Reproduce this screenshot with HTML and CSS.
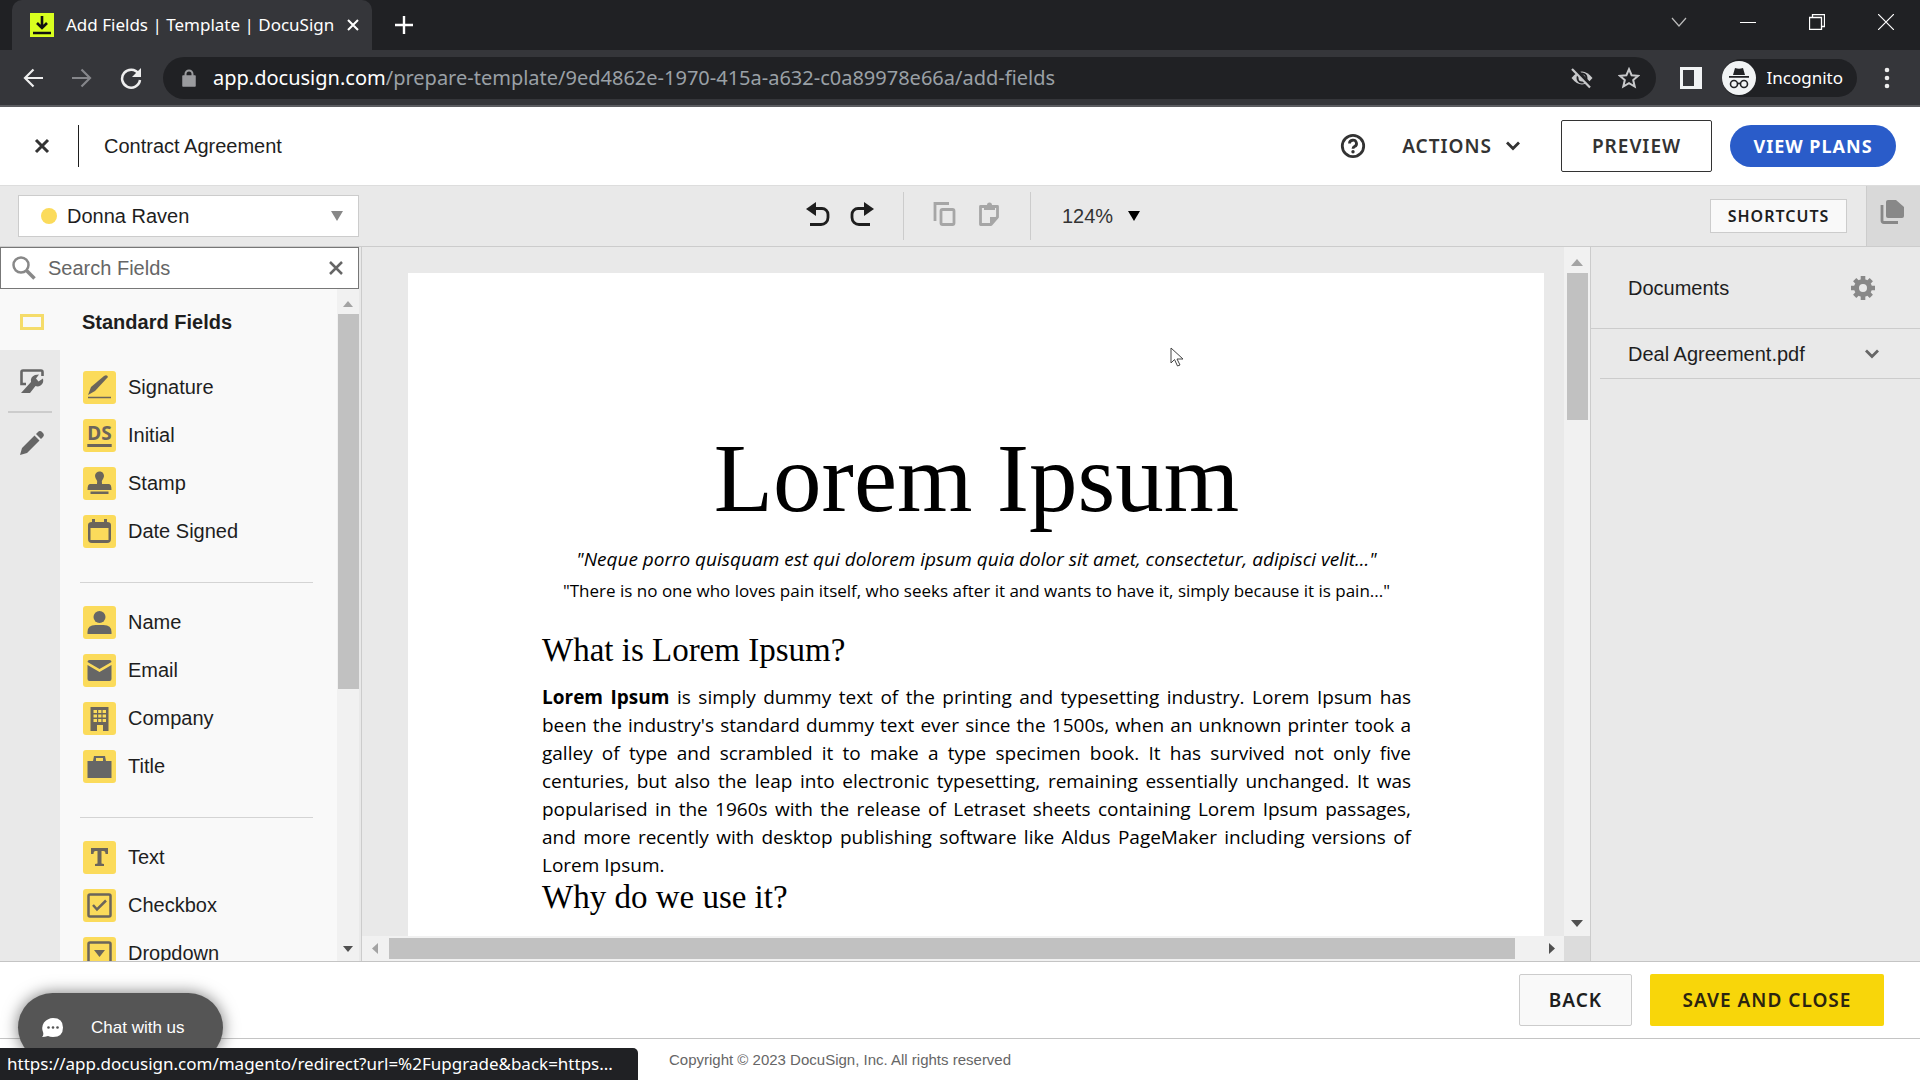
FILE: index.html
```html
<!DOCTYPE html>
<html lang="en">
<head>
<meta charset="utf-8">
<title>Add Fields | Template | DocuSign</title>
<link rel="stylesheet" href="styles.css">
</head>
<body>
<div class="browser">
  <div class="tabbar">
    <div class="tab">
      <svg class="favicon" width="24" height="24" viewBox="0 0 24 24"><path fill="#d9ff1f" d="M0 0h24v24H0z"/><path d="M12 3v12M7 10l5 5 5-5M3 20h18" fill="none" stroke="#111" stroke-width="2.6"/></svg>
      <span class="tab-title">Add Fields | Template | DocuSign</span>
      <button class="chrome-btn" aria-label="Close tab"><svg width="14" height="14" viewBox="0 0 14 14"><path d="M2 2l10 10M12 2L2 12" stroke="#fff" stroke-width="2"/></svg></button>
    </div>
    <button class="chrome-btn new-tab" aria-label="New tab"><svg width="18" height="18" viewBox="0 0 18 18"><path d="M9 0v18M0 9h18" stroke="#fff" stroke-width="2.4"/></svg></button>
    <div class="window-controls">
      <button class="chrome-btn" aria-label="Search tabs"><svg width="16" height="16" viewBox="0 0 16 16"><path d="M1 4l7 8 7-8" fill="none" stroke="#bbb" stroke-width="1.2"/></svg></button>
      <button class="chrome-btn" aria-label="Minimize"><svg width="16" height="16" viewBox="0 0 16 16"><path d="M0 8.5h16" stroke="#fff"/></svg></button>
      <button class="chrome-btn" aria-label="Restore"><svg width="16" height="16" viewBox="0 0 16 16"><path d="M.5 3.500h12v12H.5zM3.500 3V.5h12v12H13" fill="none" stroke="#fff" stroke-width="1.300"/></svg></button>
      <button class="chrome-btn" aria-label="Close window"><svg width="16" height="16" viewBox="0 0 16 16"><path d="M0 0l16 16M16 0L0 16" stroke="#fff" stroke-width="1.200"/></svg></button>
    </div>
  </div>
  <div class="navbar">
    <button class="chrome-btn nav" aria-label="Back"><svg width="20" height="20" viewBox="0 0 20 20"><path d="M20 10H2M10.500 1.500L2 10l8.500 8.500" fill="none" stroke="#eee" stroke-width="2.200"/></svg></button>
    <button class="chrome-btn nav" aria-label="Forward"><svg width="20" height="20" viewBox="0 0 20 20"><path d="M0 10h18M9.500 1.500L18 10l-8.500 8.500" fill="none" stroke="#85868a" stroke-width="2.200"/></svg></button>
    <button class="chrome-btn nav" aria-label="Reload"><svg width="22" height="22" viewBox="0 0 22 22"><path d="M18.500 6.500A9 9 0 1 0 20 13" fill="none" stroke="#eee" stroke-width="2.500"/><path d="M21 1v9h-9z" fill="#eee"/></svg></button>
    <div class="omnibox">
      <svg width="14" height="18" viewBox="0 0 14 18"><path d="M1 7h12v10H1z" fill="#9a9b9e" stroke="#9a9b9e" stroke-width="1.500" stroke-linejoin="round"/><path d="M3.500 8V5a3.500 3.500 0 0 1 7 0v3" fill="none" stroke="#9a9b9e" stroke-width="2"/></svg>
      <div class="url"><span class="host">app.docusign.com</span>/prepare-template/9ed4862e-1970-415a-a632-c0a89978e66a/add-fields</div>
      <button class="chrome-btn" aria-label="Cookies blocked"><svg width="24" height="24" viewBox="0 0 24 24"><path d="M1.500 12Q12-1 22.500 12 12 25 1.500 12z" fill="#c8c9cb"/><circle cx="12" cy="12" r="4.500" fill="none" stroke="#202124" stroke-width="2"/><path d="M4 2l18 19" stroke="#202124" stroke-width="4"/><path d="M2 3l18 18.500" stroke="#c8c9cb" stroke-width="2.200"/></svg></button>
      <button class="chrome-btn" aria-label="Bookmark"><svg width="22" height="22" viewBox="0 0 22 22"><path d="M11 2.200l2.600 6 6.500.6-4.900 4.300 1.500 6.400L11 16.100l-5.700 3.400 1.500-6.400L1.900 8.800l6.500-.6z" fill="none" stroke="#c8c9cb" stroke-width="2"/></svg></button>
    </div>
    <button class="chrome-btn side-btn" aria-label="Side panel"><svg width="22" height="22" viewBox="0 0 22 22"><path d="M0 0h22v22H0zM3 3v16h11V3z" fill="#f1f3f4" fill-rule="evenodd"/></svg></button>
    <button class="incognito"><svg width="34" height="34" viewBox="0 0 34 34"><circle cx="17" cy="17" r="17" fill="#f1f3f4"/><path d="M11 14l2-7q4 1.500 8 0l2 7zM7 15h20v1.800H7z" fill="#202124"/><g fill="none" stroke="#202124" stroke-width="1.600"><circle cx="12" cy="23" r="3.500"/><circle cx="22" cy="23" r="3.500"/><path d="M15.500 23q1.500-1.500 3 0"/></g></svg>Incognito</button>
    <button class="chrome-btn menu-btn" aria-label="Menu"><svg width="6" height="22" viewBox="0 0 6 22"><g fill="#eee"><circle cx="3" cy="3" r="2.300"/><circle cx="3" cy="11" r="2.300"/><circle cx="3" cy="19" r="2.300"/></g></svg></button>
  </div>
</div>

<header class="app-header">
  <button class="icon-btn close-btn" aria-label="Close"><svg width="16" height="16" viewBox="0 0 16 16"><path d="M2 2l12 12M14 2L2 14" stroke="#333" stroke-width="3"/></svg></button>
  <div class="doc-title">Contract Agreement</div>
  <button class="icon-btn help-btn" aria-label="Help"><svg width="26" height="26" viewBox="0 0 26 26"><circle cx="13" cy="13" r="10.700" fill="none" stroke="#333" stroke-width="2.800"/><path d="M9.500 10.500a3.500 3.300 0 1 1 5 3q-1.500.8-1.500 2.300" fill="none" stroke="#333" stroke-width="2.800"/><circle cx="13" cy="18.700" r="1.700" fill="#333"/></svg></button>
  <button class="actions-btn">ACTIONS<svg width="14" height="10" viewBox="0 0 14 10"><path d="M1 1.500l6 6 6-6" fill="none" stroke="#333" stroke-width="2.800"/></svg></button>
  <button class="btn preview-btn">PREVIEW</button>
  <button class="btn plans-btn">VIEW PLANS</button>
</header>

<div class="toolbar">
  <div class="recipient">
    <span class="dot"></span>
    <select class="recipient-select" aria-label="Recipient"><option>Donna Raven</option></select>
    <svg class="arrow" width="12" height="10" viewBox="0 0 12 10"><path d="M0 0h12L6 10z" fill="#888"/></svg>
  </div>
  <div class="tools">
    <div class="tool-group">
      <button class="icon-btn" aria-label="Undo"><svg width="24" height="24" viewBox="0 0 24 24"><path d="M8 6.500h8a6 6 0 0 1 6 6v3a7 7 0 0 1-7 7H4" fill="none" stroke="#1e1e1e" stroke-width="2.800"/><path d="M10 0v14L0 7z" fill="#1e1e1e"/></svg></button>
      <button class="icon-btn" aria-label="Redo"><svg width="24" height="24" viewBox="0 0 24 24"><path d="M16 6.500H8a6 6 0 0 0-6 6v3a7 7 0 0 0 7 7h11" fill="none" stroke="#1e1e1e" stroke-width="2.800"/><path d="M14 0v14l10-7z" fill="#1e1e1e"/></svg></button>
    </div>
    <div class="tool-group">
      <button class="icon-btn" aria-label="Copy"><svg width="24" height="24" viewBox="0 0 24 24"><path d="M16 1.500H2V19" fill="none" stroke="#a6a6a6" stroke-width="2.800"/><rect x="8" y="7.500" width="13" height="15" rx="1.500" fill="none" stroke="#a6a6a6" stroke-width="2.800"/></svg></button>
      <button class="icon-btn" aria-label="Paste"><svg width="24" height="24" viewBox="0 0 24 24"><path d="M14 22.500H3.500v-18h17V15z" fill="none" stroke="#a6a6a6" stroke-width="2.800" stroke-linejoin="round"/><path d="M7 3h3a2.500 2.500 0 0 1 5 0h3v5H7zM13 23v-8h8z" fill="#a6a6a6"/></svg></button>
    </div>
    <div class="zoom">
      <select class="zoom-select" aria-label="Zoom"><option>124%</option></select>
      <svg width="12" height="10" viewBox="0 0 12 10"><path d="M0 0h12L6 10z"/></svg>
    </div>
  </div>
  <button class="shortcuts-btn">SHORTCUTS</button>
  <button class="docs-btn" aria-label="Documents"><svg width="24" height="24" viewBox="0 0 24 24"><path d="M2 5v15.500q0 2 2 2h14" fill="none" stroke="#888" stroke-width="2.800"/><path d="M8 0h8l8 7v9q0 2-2 2H8q-2 0-2-2V2q0-2 2-2z" fill="#888"/></svg></button>
</div>

<main class="workspace">
  <aside class="sidebar">
    <div class="search">
      <svg width="26" height="26" viewBox="0 0 26 26"><circle cx="10" cy="10" r="7.500" fill="none" stroke="#888" stroke-width="2.500"/><path d="M15.500 15.500l8 8" stroke="#888" stroke-width="3.500"/></svg>
      <input class="search-input" type="text" placeholder="Search Fields" aria-label="Search Fields">
      <button class="icon-btn" aria-label="Clear search"><svg width="16" height="16" viewBox="0 0 16 16"><path d="M2 2l12 12M14 2L2 14" stroke="#666" stroke-width="2.500"/></svg></button>
    </div>
    <div class="palette">
      <nav class="rail">
        <button class="rail-btn active" aria-label="Standard fields"><svg width="24" height="16" viewBox="0 0 24 16"><path d="M1.500 1.500h21v13h-21z" fill="none" stroke="#f5dc6a" stroke-width="3"/></svg></button>
        <button class="rail-btn" aria-label="Custom fields"><svg width="24" height="24" viewBox="0 0 24 24"><path d="M6 15H1.500V3q0-1.500 1.500-1.500h18q1.500 0 1.500 1.500v4" fill="none" stroke="#666" stroke-width="2.600"/><path d="M1 24l10-11q-1-5 4-7l4-.5-3 4 2.500 3 4.500-3q1 5-2.500 7-2.500 1.500-5 .5L10 24z" fill="#666"/></svg></button>
        <button class="rail-btn divided" aria-label="Pre-fill tools"><svg width="24" height="24" viewBox="0 0 24 24"><path d="M0 24l2-7L14.500 4.500l5 5L7 22zM16 3l2-2q2-2 4.500.5T23 6l-2 2z" fill="#666"/></svg></button>
      </nav>
      <section class="fields">
        <h2 class="fields-title">Standard Fields</h2>
        <ul class="field-group">
          <li><button class="field"><svg viewBox="0 0 33 33"><path d="M5 24l3-8L21 5q3-2 4 1L12 20z" fill="#6b655b"/><path d="M5 26.500h23" stroke="#6b655b" stroke-width="1.500"/></svg>Signature</button></li>
          <li><button class="field"><span class="ds">DS</span>Initial</button></li>
          <li><button class="field"><svg viewBox="0 0 33 33"><path d="M12 9a4.500 4.500 0 1 1 8.500 2q-2 2-1.500 6h7q2.500 0 2.500 6h-24q0-6 2.500-6h7q.5-4-1.500-6zM7.500 24.500h18V27h-18z" fill="#6b655b"/></svg>Stamp</button></li>
          <li><button class="field"><svg viewBox="0 0 33 33"><path d="M9 4h3v3h9V4h3v3q4 0 4 3v14q0 4-4 4H9q-4 0-4-4V10q0-3 4-3zM7.500 13v12h18V13z" fill="#6b655b" fill-rule="evenodd"/></svg>Date Signed</button></li>
        </ul>
        <ul class="field-group">
          <li><button class="field"><svg viewBox="0 0 33 33"><circle cx="16.500" cy="11" r="6" fill="#666"/><path d="M4.500 28v-2q0-7 8-7h8q8 0 8 7v2z" fill="#666"/></svg>Name</button></li>
          <li><button class="field"><svg viewBox="0 0 33 33"><path d="M4.500 8q0-2 2-2h20q2 0 2 2l-12 7zM4.500 11l12 7 12-7v14q0 2-2 2h-20q-2 0-2-2z" fill="#666"/></svg>Email</button></li>
          <li><button class="field"><svg viewBox="0 0 33 33"><path d="M7.500 5h18v24H20v-6h-6v6H7.500z" fill="#6b655b"/><g fill="#fbdb5b"><path d="M10.500 8H14v3h-3.500zM15.200 8h3.200v3h-3.200zM19.600 8H23v3h-3.400zM10.500 12.500H14v3h-3.500zM15.200 12.500h3.200v3h-3.200zM19.600 12.500H23v3h-3.400zM10.500 17H14v3h-3.500zM15.200 17h3.200v3h-3.200zM19.600 17H23v3h-3.400z"/></g></svg>Company</button></li>
          <li><button class="field"><svg viewBox="0 0 33 33"><path d="M10 11l1-5h11l1 5h5.500v17h-24V11zM13 8v3h7V8z" fill="#666" fill-rule="evenodd"/></svg>Title</button></li>
        </ul>
        <ul class="field-group">
          <li><button class="field"><svg viewBox="0 0 33 33"><path d="M8 7h17v6h-2.500q0-3-2-3h-2v12.500q1 0 2.500.5v2h-9v-2q1.500-.5 2.500-.5V10h-2q-2 0-2 3H8z" fill="#6b655b"/></svg>Text</button></li>
          <li><button class="field"><svg viewBox="0 0 33 33"><rect x="5.500" y="5.500" width="22" height="22" rx="1.500" fill="none" stroke="#6b655b" stroke-width="2.500"/><path d="M10 16l4 4.500 9-9" fill="none" stroke="#6b655b" stroke-width="2.500"/></svg>Checkbox</button></li>
          <li><button class="field"><svg viewBox="0 0 33 33"><rect x="5.500" y="5.500" width="22" height="22" rx="1.500" fill="none" stroke="#6b655b" stroke-width="2.500"/><path d="M11 13h11l-5.500 7z" fill="#6b655b"/></svg>Dropdown</button></li>
        </ul>
      </section>
      <div class="vscroll side-scroll">
        <svg width="10" height="6" viewBox="0 0 10 6"><path d="M0 6h10L5 0z" fill="#a3a3a3"/></svg>
        <div class="track"><div class="thumb"></div></div>
        <svg width="10" height="6" viewBox="0 0 10 6"><path d="M0 0h10L5 6z" fill="#505050"/></svg>
      </div>
    </div>
  </aside>

  <section class="canvas">
    <div class="viewport">
      <article class="page">
        <h1>Lorem Ipsum</h1>
        <p class="quote">"Neque porro quisquam est qui dolorem ipsum quia dolor sit amet, consectetur, adipisci velit..."</p>
        <p class="translation">"There is no one who loves pain itself, who seeks after it and wants to have it, simply because it is pain..."</p>
        <h2>What is Lorem Ipsum?</h2>
        <p class="body-text"><strong>Lorem Ipsum</strong> is simply dummy text of the printing and typesetting industry. Lorem Ipsum has been the industry's standard dummy text ever since the 1500s, when an unknown printer took a galley of type and scrambled it to make a type specimen book. It has survived not only five centuries, but also the leap into electronic typesetting, remaining essentially unchanged. It was popularised in the 1960s with the release of Letraset sheets containing Lorem Ipsum passages, and more recently with desktop publishing software like Aldus PageMaker including versions of Lorem Ipsum.</p>
        <h2>Why do we use it?</h2>
      </article>
    </div>
    <div class="vscroll page-scroll">
      <svg width="12" height="7" viewBox="0 0 12 7"><path d="M0 7h12L6 0z" fill="#a3a3a3"/></svg>
      <div class="track"><div class="thumb"></div></div>
      <svg width="12" height="7" viewBox="0 0 12 7"><path d="M0 0h12L6 7z" fill="#505050"/></svg>
    </div>
    <div class="hscroll">
      <svg width="6" height="11" viewBox="0 0 6 11"><path d="M6 0v11L0 5.500z" fill="#a3a3a3"/></svg>
      <div class="track"><div class="thumb"></div></div>
      <svg width="6" height="11" viewBox="0 0 6 11"><path d="M0 0v11l6-5.500z" fill="#505050"/></svg>
    </div>
    <div class="corner"></div>
  </section>

  <aside class="documents">
    <div class="documents-head">Documents
      <button class="icon-btn" aria-label="Settings"><svg width="24" height="24" viewBox="-12 -12 24 24"><g stroke="#888" stroke-width="4.600"><path d="M0-12V-6M0 6v6M-12 0h6M6 0h6M-8.300-8.300L-5-5M5 5l3.300 3.300M-8.300 8.300L-5 5M5-5l3.300-3.300"/></g><circle r="6.500" fill="none" stroke="#888" stroke-width="5"/></svg></button>
    </div>
    <div class="document-row">Deal Agreement.pdf
      <button class="icon-btn" aria-label="Expand"><svg width="14" height="10" viewBox="0 0 14 10"><path d="M1 1.500l6 6 6-6" fill="none" stroke="#666" stroke-width="2.800"/></svg></button>
    </div>
  </aside>
</main>

<div class="action-bar">
  <button class="btn back-btn">BACK</button>
  <button class="btn save-btn">SAVE AND CLOSE</button>
</div>
<footer class="footer">Copyright © 2023 DocuSign, Inc. All rights reserved</footer>

<button class="chat"><svg width="21" height="20" viewBox="0 0 21 20"><path d="M0 19q2-2 1-5-2-5 1-9.500Q6 0 11 0q10 0 10 9.500T11 19q-3 0-5-1-3 1-6 1z" fill="#fff"/><g fill="#555"><circle cx="6.500" cy="9.500" r="1.300"/><circle cx="11" cy="9.500" r="1.300"/><circle cx="15.500" cy="9.500" r="1.300"/></g></svg>Chat with us</button>
<div class="status">https://app.docusign.com/magento/redirect?url=%2Fupgrade&amp;back=https...</div>
<svg class="pointer" width="14" height="20" viewBox="0 0 14 20"><path d="M1 1v15l3.500-3.500 3 6.500 2.500-1-3-6H13z" fill="#fff" stroke="#444"/></svg>
</body>
</html>
```
FILE: styles.css
```css
* { box-sizing: border-box; }

body {
  margin: 0;
  height: 100vh;
  display: flex;
  flex-direction: column;
  overflow: hidden;
  position: relative;
  background: #fff;
  color: #1e1e1e;
  font: 20px/24px "Liberation Sans", Arial, sans-serif;
}

button, select, input { font: inherit; color: inherit; border: 0; padding: 0; margin: 0; background: none; }
select { appearance: none; }
svg { display: block; flex: none; }
h1, h2, p, ul { margin: 0; padding: 0; }
ul { list-style: none; }

/* browser frame */
.browser {
  background: #35363a;
  border-bottom: 2px solid #5b5c60;
  color: #fff;
  font-family: "Noto Sans", sans-serif;
}
.tabbar { display: flex; height: 50px; padding-left: 12px; background: #202124; }
.tab {
  display: flex;
  align-items: center;
  width: 360px;
  padding: 0 18px;
  gap: 12px;
  border-radius: 10px 10px 0 0;
  background: #35363a;
}
.tab-title { flex: 1; font-size: 17px; white-space: nowrap; }
.chrome-btn { display: grid; place-items: center; flex: none; }
.new-tab { width: 64px; }
.window-controls { display: flex; height: 44px; margin-left: auto; }
.window-controls .chrome-btn { width: 69px; }
.navbar { display: flex; align-items: center; height: 55px; padding-right: 20px; padding-left: 8px; }
.nav { width: 49px; }
.omnibox {
  flex: 1;
  display: flex;
  align-items: center;
  gap: 24px;
  height: 42px;
  margin-left: 8px;
  padding: 0 16px 0 19px;
  border-radius: 21px;
  background: #202124;
  color: #9aa0a6;
}
.url { flex: 1; margin-left: -7px; font-size: 20px; white-space: nowrap; }
.host { color: #fff; }
.side-btn { width: 66px; padding-left: 4px; }
.incognito {
  display: flex;
  align-items: center;
  gap: 11px;
  height: 38px;
  padding-right: 14px;
  border-radius: 19px;
  background: #202124;
  font-size: 17px;
}
.menu-btn { width: 26px; margin-left: 17px; }

/* application header */
.app-header { display: flex; align-items: center; height: 78px; padding: 0 24px 0 34px; }
.icon-btn { display: grid; place-items: center; flex: none; }
.close-btn { margin-right: 28px; }
.doc-title { margin-right: auto; padding-left: 25px; border-left: 1px solid #1e1e1e; line-height: 42px; }
.help-btn { margin-right: 36px; }
.actions-btn, .btn, .shortcuts-btn {
  font-family: "Noto Sans", sans-serif;
  font-weight: 600;
  font-size: 19px;
  letter-spacing: 1px;
  color: #333;
  white-space: nowrap;
}
.actions-btn { display: flex; align-items: center; gap: 14px; margin-right: 41px; }
.btn { height: 52px; border: 1px solid #333; border-radius: 2px; }
.preview-btn { width: 151px; }
.plans-btn {
  width: 166px;
  height: 42px;
  margin-left: 18px;
  border: 0;
  border-radius: 21px;
  background: #2a5cc9;
  color: #fff;
  font-weight: 700;
  font-size: 18px;
}

/* editing toolbar */
.toolbar {
  display: grid;
  grid-template-columns: 359px 1fr auto 54px;
  align-items: center;
  height: 62px;
  border-top: 1px solid #ddd;
  border-bottom: 1px solid #ccc;
  background: #e9e9e9;
}
.recipient {
  display: flex;
  align-items: center;
  height: 42px;
  margin-left: 18px;
  padding: 0 15px 0 22px;
  border: 1px solid #ccc;
  background: #fff;
}
.dot { width: 16px; height: 16px; border-radius: 8px; background: #fbdb5b; }
.recipient-select { flex: 1; padding-left: 10px; }
.tools { display: flex; justify-content: center; align-items: center; height: 48px; padding-right: 152px; }
.tool-group { display: flex; align-items: center; gap: 20px; height: 48px; padding: 0 29px; border-right: 1px solid #ccc; }
.tool-group .icon-btn { padding-bottom: 4px; }
.zoom { display: flex; align-items: center; gap: 14px; padding-left: 31px; color: #333; }
.shortcuts-btn {
  width: 137px;
  height: 34px;
  margin-right: 19px;
  border: 1px solid #ccc;
  background: #f9f9f9;
  color: #1e1e1e;
  font-size: 16px;
}
.docs-btn { display: grid; place-items: center; height: 60px; padding: 0 4px 8px 0; border-left: 1px solid #ccc; background: #d9d9d9; }

/* workspace */
.workspace {
  flex: 1;
  min-height: 0;
  display: grid;
  grid-template-columns: 362px 1fr 330px;
  border-bottom: 1px solid #c4c4c4;
  background: #e9e9e9;
}
.sidebar { display: flex; flex-direction: column; min-height: 0; padding-right: 2px; border-right: 1px solid #ccc; }
.search {
  display: flex;
  align-items: center;
  height: 42px;
  padding: 0 14px 0 10px;
  border: 1px solid #777;
  background: #fff;
}
.search-input { flex: 1; min-width: 0; padding-left: 11px; outline: 0; }
.search-input::placeholder { color: #666; opacity: 1; }
.palette { flex: 1; min-height: 0; display: grid; grid-template-columns: 60px 1fr 22px; }
.rail { display: flex; flex-direction: column; }
.rail-btn { display: grid; place-items: center; height: 61px; padding-left: 4px; }
.rail-btn.active { background: #f9f9f9; padding-top: 4px; }
.rail-btn.divided { margin: 0 8px; border-top: 2px solid #ccc; }
.fields { min-height: 0; overflow: hidden; padding: 21px 24px 0 20px; background: #f9f9f9; }
.fields-title { padding: 0 2px 29px; font-size: 20px; line-height: 24px; }
.field-group { padding-bottom: 27px; }
.field-group + .field-group { padding-top: 15px; border-top: 1px solid #d4d4d4; }
.field { display: flex; align-items: center; gap: 12px; width: 100%; height: 48px; padding-left: 3px; }
.field svg, .ds { width: 33px; height: 33px; border-radius: 3px; background: #fbdb5b; }
.ds {
  padding-top: 3px;
  color: #6b655b;
  font-family: "Noto Sans", sans-serif;
  font-weight: 700;
  font-size: 19px;
  line-height: 22px;
  text-align: center;
  text-decoration: underline;
  text-decoration-thickness: 3px;
  text-underline-offset: 4px;
}

/* scrollbars */
.vscroll { display: flex; flex-direction: column; align-items: center; padding: 12px 0 9px; background: #f1f1f1; }
.track { flex: 1; }
.thumb { background: #c1c1c1; }
.vscroll .track { width: 21px; padding: 7px 0; }
.side-scroll .thumb { height: 60%; }
.page-scroll .thumb { height: 23%; }
.hscroll { display: flex; align-items: center; padding: 0 9px 0 10px; background: #f1f1f1; }
.hscroll .track { padding: 0 11px; }
.hscroll .thumb { width: 98%; height: 21px; }
.corner { background: #dcdcdc; }

/* document canvas */
.canvas {
  display: grid;
  grid-template-columns: 1fr 26px;
  grid-template-rows: 1fr 25px;
  min-width: 0;
  min-height: 0;
}
.viewport { min-height: 0; overflow: hidden; padding: 26px 20px 0 46px; }
.page { min-height: 100%; padding: 157px 133px 0 134px; background: #fff; color: #000; font-family: "Open Sans", sans-serif; }
.page h1, .page h2 { font-family: "Liberation Serif", "Times New Roman", serif; font-weight: 400; }
.page h1 { font-size: 97px; line-height: 98px; text-align: center; }
.page h2 { font-size: 33px; line-height: 36px; }
.quote, .translation { text-align: center; white-space: nowrap; }
.quote { padding-top: 17px; font-size: 19px; line-height: 28px; font-style: italic; }
.translation { padding: 4px 0 27px; font-size: 17px; line-height: 28px; }
.body-text { padding-top: 15px; font-size: 19px; line-height: 28px; text-align: justify; }

/* documents panel */
.documents { border-left: 1px solid #ccc; }
.documents-head, .document-row { display: flex; align-items: center; justify-content: space-between; border-bottom: 1px solid #ccc; }
.documents-head { height: 82px; padding: 0 45px 0 37px; }
.document-row { height: 50px; margin-left: 9px; padding: 0 41px 0 28px; }

/* bottom bars */
.action-bar { display: flex; align-items: center; justify-content: flex-end; gap: 18px; height: 77px; padding-right: 36px; border-bottom: 1px solid #c4c4c4; }
.back-btn { width: 113px; border-color: #ccc; background: #f9f9f9; color: #1e1e1e; }
.save-btn { width: 234px; border: 0; background: #f8d60a; color: #2b2410; }
.footer { height: 41px; padding-left: 669px; color: #666; font-size: 15px; line-height: 41px; }

/* overlays */
.chat {
  position: absolute;
  bottom: 18px;
  left: 18px;
  display: flex;
  align-items: center;
  gap: 28px;
  width: 205px;
  height: 69px;
  padding-left: 24px;
  border-radius: 35px;
  background: #555;
  box-shadow: 0 0 16px #0008;
  color: #fff;
  font-size: 17px;
}
.status {
  position: absolute;
  bottom: 0;
  left: 0;
  width: 638px;
  height: 32px;
  padding-left: 7px;
  border-top-right-radius: 5px;
  background: #202124;
  color: #fff;
  font: 17px/32px "Noto Sans", sans-serif;
  white-space: nowrap;
}
.pointer { position: absolute; top: 347px; left: 1170px; }
```
